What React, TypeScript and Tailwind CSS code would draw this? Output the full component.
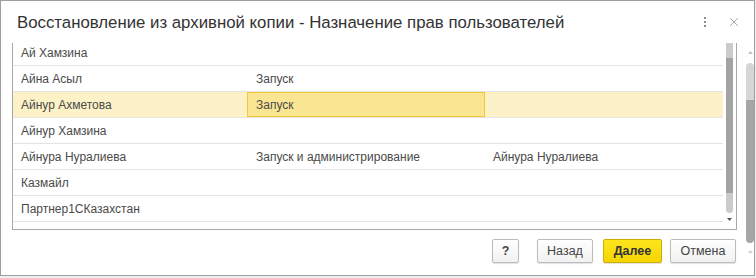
import { X } from 'lucide-react'

const rows = [
  { name: 'Ай Хамзина', role: '', owner: '' },
  { name: 'Айна Асыл', role: 'Запуск', owner: '' },
  { name: 'Айнур Ахметова', role: 'Запуск', owner: '', selected: true },
  { name: 'Айнур Хамзина', role: '', owner: '' },
  { name: 'Айнура Нуралиева', role: 'Запуск и администрирование', owner: 'Айнура Нуралиева' },
  { name: 'Казмайл', role: '', owner: '' },
  { name: 'Партнер1СКазахстан', role: '', owner: '' },
  { name: '', role: '', owner: '' },
]

function Arrow({ up, className }: { up?: boolean; className: string }) {
  return (
    <svg width="5" height="3" viewBox="0 0 5 3" className={className}>
      <path d={up ? 'M0 3 L2.5 0 L5 3 Z' : 'M0 0 L5 0 L2.5 3 Z'} fill="currentColor" />
    </svg>
  )
}

function Btn({ children, primary, className }: { children: React.ReactNode; primary?: boolean; className?: string }) {
  return (
    <button
      className={
        'h-[24px] rounded-[2px] border text-[12.5px] leading-none shadow-[0_1px_1px_rgba(0,0,0,0.12)] ' +
        (primary
          ? 'border-[#cfae00] bg-gradient-to-b from-[#fde51c] to-[#f4d500] font-bold text-[#333]'
          : 'border-[#bcbcbc] bg-gradient-to-b from-white to-[#f1f1f1] text-[#444]') +
        ' ' +
        (className ?? '')
      }
    >
      {children}
    </button>
  )
}

export default function App() {
  return (
    <div className="h-[278px] w-[756px] bg-[#efefef] font-['Liberation_Sans',Arial,sans-serif]">
      <div className="flex h-[276px] w-[755px] flex-col border border-[#9e9e9e] bg-white">
        {/* header */}
        <div className="flex h-[42px] shrink-0 items-center pl-[16px] pr-[12px]">
          <h1 className="flex-1 pt-[2px] text-[16.8px] text-[#333]">
            Восстановление из архивной копии - Назначение прав пользователей
          </h1>
          <div className="mr-[21px] flex flex-col gap-[2px]">
            <span className="h-[2px] w-[2px] bg-[#8a8a8a]" />
            <span className="h-[2px] w-[2px] bg-[#8a8a8a]" />
            <span className="h-[2px] w-[2px] bg-[#8a8a8a]" />
          </div>
          <X size={14} strokeWidth={1.2} className="mr-[1px] text-[#7a7a7a]" />
        </div>

        {/* body */}
        <div className="flex flex-1">
          <div className="ml-[11px] flex w-[725px] flex-col">
            <div className="flex h-[187px] border-x border-b border-[#a9a9a9]">
              <div className="w-[710px] overflow-hidden">
                <div className="-mt-[3px]">
                  {rows.map((r, i) => (
                    <div
                      key={i}
                      className={
                        'flex h-[26px] border-b border-[#e4e4e4] text-[12px] text-[#4a4a4a] ' +
                        (r.selected ? 'bg-[#fdf2c7]' : '')
                      }
                    >
                      <div className="flex w-[234px] items-center pl-[8px]">{r.name}</div>
                      <div
                        className={
                          'flex w-[238px] items-center pl-[8px] ' +
                          (r.selected ? 'border border-[#f3c933] bg-[#fae592]' : 'pl-[9px]')
                        }
                      >
                        {r.role}
                      </div>
                      <div className="flex w-[238px] items-center pl-[8px]">{r.owner}</div>
                    </div>
                  ))}
                </div>
              </div>
              {/* inner scrollbar */}
              <div className="ml-[3px] flex w-[7px] flex-col items-center">
                <div className="h-[15px] w-full bg-[#cbcbcb]" />
                <div className="h-[135px] w-full bg-[#a3a3a3]" />
                <div className="h-[20px] w-full rounded-b-[4px] bg-[#cbcbcb]" />
                <Arrow className="mt-[5px] text-[#555]" />
              </div>
            </div>

            <div className="mt-[9px] flex items-center justify-end pr-[1px]">
              <Btn className="w-[27px] font-bold">?</Btn>
              <Btn className="ml-[18px] w-[56px]">Назад</Btn>
              <Btn primary className="ml-[10px] w-[59px]">
                Далее
              </Btn>
              <Btn className="ml-[8px] w-[66px]">Отмена</Btn>
            </div>
          </div>

          {/* outer scrollbar */}
          <div className="ml-[9px] flex w-[8px] flex-col items-center">
            <Arrow up className="mt-[8px] text-[#c4c4c4]" />
            <div className="mt-[9px] h-[37px] w-full rounded-t-[4px] bg-[#d6d6d6]" />
            <div className="h-[143px] w-full rounded-b-[4px] bg-[#a6a6a6]" />
            <Arrow className="mt-[8px] text-[#d0d0d0]" />
          </div>
        </div>
      </div>
    </div>
  )
}
